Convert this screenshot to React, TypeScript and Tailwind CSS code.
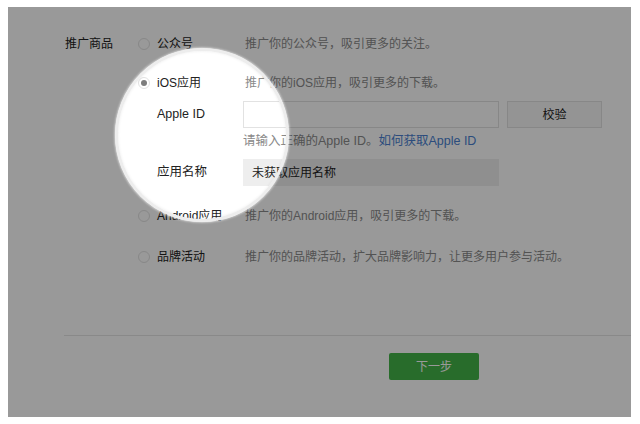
import type { ReactNode } from 'react'

const font = { fontFamily: '"Liberation Sans", "Noto Sans CJK SC", sans-serif' }

function Radio({ checked }: { checked?: boolean }) {
  return (
    <span className="w-[12px] h-[12px] rounded-full border border-[#e2e2e2] flex items-center justify-center shrink-0">
      {checked && <span className="w-[6px] h-[6px] rounded-full bg-[#7d7d7d]" />}
    </span>
  )
}

function OptionRow({ label, desc, checked, className }: { label: string; desc: string; checked?: boolean; className?: string }) {
  return (
    <div className={`flex items-center h-[20px] pl-[73px] ${className ?? ''}`}>
      <Radio checked={checked} />
      <span className="ml-[7px] w-[88px] text-[12px] text-[#222]">{label}</span>
      <span className="text-[12px] text-[#8a8a8a]">{desc}</span>
    </div>
  )
}

function SubRow({ label, children, className }: { label: string; children: ReactNode; className?: string }) {
  return (
    <div className={`flex items-center pl-[92px] ${className ?? ''}`}>
      <span className="w-[86px] text-[12.5px] text-[#222]">{label}</span>
      {children}
    </div>
  )
}

export default function App() {
  return (
    <div className="w-[640px] h-[424px] bg-white pt-[7px] pl-[8px]" style={font}>
      <div className="relative w-[623px] h-[410px] bg-white overflow-hidden">
        <div className="pl-[57px] pt-[27px]">
          {/* 推广商品 */}
          <div className="flex items-center h-[20px]">
            <span className="w-[73px] text-[12px] text-[#222]">推广商品</span>
            <Radio />
            <span className="ml-[7px] w-[88px] text-[12px] text-[#222]">公众号</span>
            <span className="text-[12px] text-[#8a8a8a]">推广你的公众号，吸引更多的关注。</span>
          </div>

          <OptionRow className="mt-[19px]" label="iOS应用" desc="推广你的iOS应用，吸引更多的下载。" checked />

          <SubRow className="mt-[8px]" label="Apple ID">
            <div className="w-[256px] h-[27px] border border-[#e2e2e2] bg-white" />
            <button className="ml-[8px] w-[95px] h-[27px] border border-[#e2e2e2] bg-[#f7f7f7] text-[12px] text-[#222]">
              校验
            </button>
          </SubRow>

          <div className="pl-[178px] mt-[5px] h-[16px] flex items-center text-[12.5px]">
            <span className="text-[#8a8a8a]">请输入正确的Apple ID。</span>
            <span className="text-[#4a7fd0]">如何获取Apple ID</span>
          </div>

          <SubRow className="mt-[10px]" label="应用名称">
            <div className="w-[256px] h-[27px] bg-[#eeeeee] flex items-center pl-[9px] text-[12px] text-[#222]">
              未获取应用名称
            </div>
          </SubRow>

          <OptionRow className="mt-[20px]" label="Android应用" desc="推广你的Android应用，吸引更多的下载。" />
          <OptionRow className="mt-[21px]" label="品牌活动" desc="推广你的品牌活动，扩大品牌影响力，让更多用户参与活动。" />
        </div>

        <div className="ml-[56px] mt-[68px] h-px bg-[#e4e4e4]" />

        <div className="pl-[381px] mt-[17px]">
          <button className="w-[90px] h-[27px] rounded-[2px] bg-[#44b549] text-[12px] text-white">下一步</button>
        </div>

        {/* magnifier */}
        <div className="absolute left-[107px] top-[41px] w-[174px] h-[174px] rounded-full border-[3px] border-[#ededed] shadow-[inset_0_0_3px_rgba(0,0,0,0.08),0_0_2px_1px_rgba(255,255,255,0.5),0_0_0_1200px_rgba(0,0,0,0.4)]" />
      </div>
    </div>
  )
}
